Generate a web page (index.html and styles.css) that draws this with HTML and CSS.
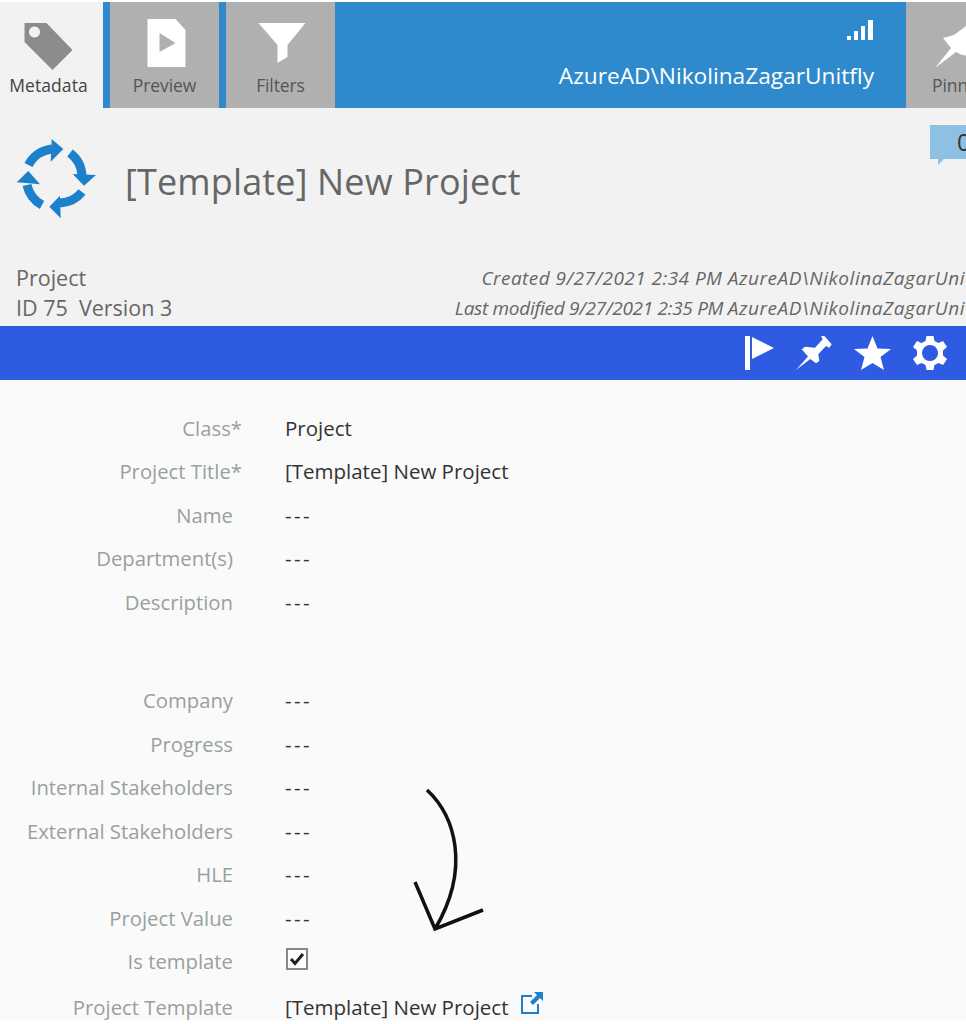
FILE: index.html
```html
<!DOCTYPE html>
<html lang="en">
<head>
  <meta charset="UTF-8">
  <title>[Template] New Project</title>
  <meta name="viewport" content="width=device-width, initial-scale=1.0">
  <link rel="stylesheet" href="styles.css">
</head>
<body>
  <div class="page">
    <nav class="tabbar">
      <button class="tab active">
        <svg class="tab-icon" width="56" height="56" viewBox="0 0 56 56"><path fill="#8c8c8e" fill-rule="evenodd" d="M.5 5 H22.500 L48.500 32 L28.500 52 L.5 24 Z M10.500 8.500 a5.500 5.500 0 1 0 .01 0 Z"/></svg>
        <span class="tab-label">Metadata</span>
      </button>
      <button class="tab">
        <svg class="tab-icon" width="56" height="56" viewBox="0 0 56 56"><path fill="#fff" fill-rule="evenodd" d="M10.500 1 H38.500 L48.500 12 V49 H10.500 Z M22.500 15 V34 L38.500 25 Z"/></svg>
        <span class="tab-label">Preview</span>
      </button>
      <button class="tab">
        <svg class="tab-icon" width="56" height="56" viewBox="0 0 56 56"><path fill="#fff" d="M5.500 5 H52.500 L34.500 27 V39 L24.500 45 V27 Z"/></svg>
        <span class="tab-label">Filters</span>
      </button>
      <div class="user-box">
        <svg class="signal" width="28" height="22" viewBox="0 0 28 22"><path fill="#fff" d="M1 17 H5 V21 H1 Z M8 12 H12 V21 H8 Z M15 7 H19 V21 H15 Z M22 1 H27 V21 H22 Z"/></svg>
        <span class="user-name">AzureAD\NikolinaZagarUnitfly</span>
      </div>
      <button class="tab tab-pinned">
        <svg class="tab-icon" width="56" height="56" viewBox="0 0 56 56"><path fill="#fff" d="M3 50 L19 30 L11 20 L22 17 L34 8 L62 20 L50 40 L30 37 L24 34 Z"/></svg>
        <span class="tab-label">Pinned</span>
      </button>
    </nav>

    <header class="object-head">
      <div class="title-row">
        <svg class="object-icon" width="82" height="82" viewBox="0 0 82 82">
          <g fill="none" stroke="#1d80ca" stroke-width="9">
            <path d="M13.500 27 A30 30 0 0 1 37 11"/>
            <path d="M55 15 A30 30 0 0 1 67 38"/>
            <path d="M67 54 A30 30 0 0 1 45 65"/>
            <path d="M27 67 A30 30 0 0 1 12 47"/>
          </g>
          <g fill="#1d80ca">
            <path d="M36.700 1 L48.300 11 L35.700 23.700 Z"/>
            <path d="M57.700 36 L81 37 L69 47.700 Z"/>
            <path d="M45 57.700 L34.300 68.700 L45.700 80.300 Z"/>
            <path d="M1.700 44.300 L13.300 33 L25 46.300 Z"/>
          </g>
        </svg>
        <h1 class="object-title">[Template] New Project</h1>
      </div>
      <div class="comment-badge">0</div>
      <div class="meta-row">
        <div class="meta-left">
          <div>Project</div>
          <div>ID 75&nbsp; Version 3</div>
        </div>
        <div class="meta-right">
          <div class="meta-created">Created 9/27/2021 2:34 PM <span class="meta-user">AzureAD\NikolinaZagarUnitfly</span></div>
          <div class="meta-modified">Last modified 9/27/2021 2:35 PM <span class="meta-user">AzureAD\NikolinaZagarUnitfly</span></div>
        </div>
      </div>
    </header>

    <div class="action-bar">
      <svg width="30" height="34" viewBox="0 0 30 34"><path fill="#fff" d="M0 0 H5 V34 H0 Z M7 1 L29 12 L7 23 Z"/></svg>
      <svg width="37" height="34" viewBox="0 0 37 34"><path fill="#fff" d="M0 34 L12 20.500 L5.700 13.300 L9 10.700 L19 11.700 L26.700 3.300 L25 0 H28.300 L35.700 8.300 L33.300 11.700 L30 10 L22.300 18.300 L23.300 25 L20 27.300 L14.300 23 Z"/></svg>
      <svg width="37" height="34" viewBox="0 0 37 34"><path fill="#fff" d="M18.500 0 L23.500 12.500 L37 13 L26.500 21 L30 34 L18.500 27 L7 34 L10.500 21 L0 13 L13.500 12.500 Z"/></svg>
      <svg width="36" height="36" viewBox="0 0 36 36"><path fill="#fff" fill-rule="evenodd" d="M14.500 1 H21.500 L22.500 6 L26.500 8 L31 6 L35 12 L31 15.500 V20.500 L35 24 L31 30 L26.500 28 L22.500 30 L21.500 35 H14.500 L13.500 30 L9.500 28 L5 30 L1 24 L5 20.500 V15.500 L1 12 L5 6 L9.500 8 L13.500 6 Z M18 10 a8 8 0 1 0 .01 0 Z"/></svg>
    </div>

    <main class="fields">
      <div class="field"><span class="field-label required">Class*</span><span class="field-value">Project</span></div>
      <div class="field"><span class="field-label required">Project Title*</span><span class="field-value">[Template] New Project</span></div>
      <div class="field"><span class="field-label">Name</span><span class="field-value empty">---</span></div>
      <div class="field"><span class="field-label">Department(s)</span><span class="field-value empty">---</span></div>
      <div class="field"><span class="field-label">Description</span><span class="field-value empty">---</span></div>
      <div class="field-gap"></div>
      <div class="field"><span class="field-label">Company</span><span class="field-value empty">---</span></div>
      <div class="field"><span class="field-label">Progress</span><span class="field-value empty">---</span></div>
      <div class="field"><span class="field-label">Internal Stakeholders</span><span class="field-value empty">---</span></div>
      <div class="field"><span class="field-label">External Stakeholders</span><span class="field-value empty">---</span></div>
      <div class="field"><span class="field-label">HLE</span><span class="field-value empty">---</span></div>
      <div class="field"><span class="field-label">Project Value</span><span class="field-value empty">---</span></div>
      <div class="field">
        <span class="field-label">Is template</span>
        <span class="checkbox">
          <svg width="16" height="14" viewBox="0 0 16 14"><path fill="none" stroke="#222" stroke-width="3" d="M2 7 L6 11.500 L14 2"/></svg>
        </span>
      </div>
      <div class="field field-last">
        <span class="field-label">Project Template</span>
        <span class="field-value">[Template] New Project</span>
        <svg class="open-link" width="24" height="24" viewBox="0 0 24 24">
          <path fill="none" stroke="#1d80ca" stroke-width="2" d="M12 5 H2 V22 H18 V13"/>
          <path fill="#1d80ca" d="M14 1 H23 V10 L20 7 L13 14 L10 11 L17 4 Z"/>
        </svg>
      </div>
      <svg class="arrow" width="80" height="150" viewBox="0 0 80 150">
        <path fill="none" stroke="#111" stroke-width="3.500" d="M14 2 C42 28 58 80 22 141 M2 94 L22 141 L70 122"/>
      </svg>
    </main>
  </div>
</body>
</html>
```

FILE: styles.css
```css
body {
  margin: 0;
  background: #fff;
  color: #3a3a3a;
  font-family: 'Open Sans', 'Noto Sans', Arial, sans-serif;
}
.page {
  position: relative;
  box-sizing: border-box;
  width: 966px;
  height: 1020px;
  padding-top: 2px;
  overflow: hidden;
  background: linear-gradient(#fff 2px, #fafafa 2px);
}
.tabbar {
  display: flex;
  height: 106px;
  background: #2f8acd;
}
.tab {
  width: 109px;
  flex-shrink: 0;
  margin-right: 7px;
  padding: 16px 0 0;
  border: none;
  background: #b0b0b0;
  color: #555;
  font-family: inherit;
  display: flex;
  flex-direction: column;
  align-items: center;
}
.tab.active {
  width: 103px;
  background: #f2f2f2;
  color: #444;
}
.tab-icon {
  display: block;
  flex-shrink: 0;
}
.tab-label {
  margin-top: -1px;
  font-size: 17.500px;
  letter-spacing: -.1px;
}
.tab.active .tab-label {
  margin-right: 6px;
  letter-spacing: .1px;
}
.tab-pinned {
  width: 60px;
  margin-right: 0;
  align-items: flex-start;
  padding-left: 26px;
  overflow: hidden;
}
.user-box {
  flex: 1;
  display: flex;
  flex-direction: column;
  align-items: flex-end;
  padding: 17px 32px 0 0;
  color: #fff;
}
.signal {
  display: block;
}
.user-name {
  margin-top: 19px;
  font-size: 22.700px;
  line-height: 31px;
  white-space: nowrap;
}
.object-head {
  position: relative;
  height: 218px;
  background: #f2f2f2;
}
.title-row {
  display: flex;
  align-items: center;
  gap: 28px;
  padding: 30px 0 0 15px;
}
.object-title {
  margin: 0;
  padding-top: 5px;
  font-size: 36px;
  font-weight: 400;
  color: #666;
  letter-spacing: .15px;
}
.comment-badge {
  position: absolute;
  top: 17px;
  left: 930px;
  width: 50px;
  height: 34px;
  padding-left: 27px;
  background: #8ec0e4;
  color: #333;
  font-size: 24px;
  line-height: 34px;
}
.comment-badge::after {
  content: "";
  position: absolute;
  left: 8px;
  top: 34px;
  border-top: 6px solid #8ec0e4;
  border-right: 6px solid transparent;
}
.meta-row {
  display: flex;
  justify-content: space-between;
  margin-top: 43px;
  margin-right: -27px;
  padding-left: 16px;
  line-height: 30px;
  color: #666;
}
.meta-left {
  font-size: 21.500px;
}
.meta-right {
  text-align: right;
  font-style: italic;
  font-size: 19px;
  white-space: nowrap;
}
.meta-created {
  letter-spacing: .45px;
}
.meta-modified {
  letter-spacing: -.3px;
}
.meta-user {
  letter-spacing: .55px;
}
.action-bar {
  display: flex;
  justify-content: flex-end;
  align-items: center;
  gap: 21px;
  height: 54px;
  padding-right: 18px;
  background: #2f5be3;
}
.fields {
  position: relative;
  padding-top: 26px;
  font-size: 20.500px;
}
.field {
  display: flex;
  align-items: center;
  height: 43.500px;
}
.field-gap {
  height: 55px;
}
.field-label {
  width: 233px;
  margin-right: 52px;
  text-align: right;
  white-space: nowrap;
  font-size: 20.300px;
  color: #98a0a0;
}
.field-label.required {
  width: 242px;
  margin-right: 43px;
}
.field-value {
  color: #333;
}
.field-value.empty {
  letter-spacing: 2.400px;
}
.field-last {
  margin-top: 2px;
}
.checkbox {
  display: flex;
  align-items: center;
  justify-content: center;
  box-sizing: border-box;
  width: 22px;
  height: 22px;
  margin: -4px 0 0 1px;
  border: 2px solid #888;
  background: #fff;
}
.open-link {
  margin: -8px 0 0 12px;
}
.arrow {
  position: absolute;
  left: 413px;
  top: 408px;
}
```
